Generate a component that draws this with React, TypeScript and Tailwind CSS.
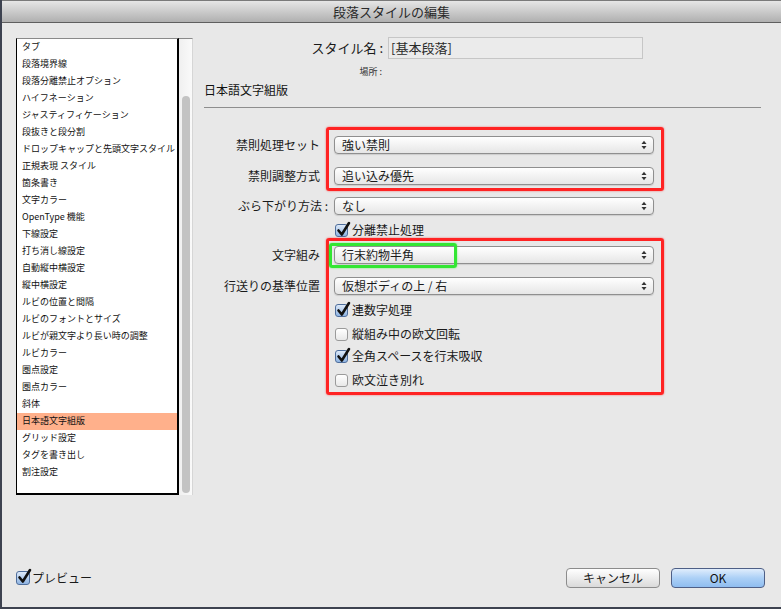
import React from 'react'

const listItems = [
  'タブ',
  '段落境界線',
  '段落分離禁止オプション',
  'ハイフネーション',
  'ジャスティフィケーション',
  '段抜きと段分割',
  'ドロップキャップと先頭文字スタイル',
  '正規表現 スタイル',
  '箇条書き',
  '文字カラー',
  'OpenType 機能',
  '下線設定',
  '打ち消し線設定',
  '自動縦中横設定',
  '縦中横設定',
  'ルビの位置と間隔',
  'ルビのフォントとサイズ',
  'ルビが親文字より長い時の調整',
  'ルビカラー',
  '圏点設定',
  '圏点カラー',
  '斜体',
  '日本語文字組版',
  'グリッド設定',
  'タグを書き出し',
  '割注設定',
]

function Select({ value }: { value: string }) {
  return (
    <div className="flex h-[18px] w-[320px] items-center rounded-[4px] border border-[#8f8f8f] bg-linear-to-b from-white to-[#e6e6e6] pl-[7px] pr-[6px] shadow-[0_1px_1px_rgba(0,0,0,0.12)]">
      <span className="flex-1 text-[12px] leading-[16px] text-[#1a1a1a]">{value}</span>
      <svg width="6" height="10" viewBox="0 0 6 10">
        <path d="M0.5 4 L3 0.8 L5.5 4 Z" fill="#333" />
        <path d="M0.5 6 L3 9.2 L5.5 6 Z" fill="#333" />
      </svg>
    </div>
  )
}

function CheckBox({ checked, size = 13 }: { checked: boolean; size?: number }) {
  return (
    <div
      className={`relative shrink-0 rounded-[3px] border ${
        checked
          ? 'border-[#4f6e9c] bg-linear-to-b from-[#dde9f8] to-[#8fb4e2]'
          : 'border-[#9a9a9a] bg-linear-to-b from-white to-[#e8e8e8]'
      } ${size === 13 ? 'h-[13px] w-[13px]' : 'h-[14px] w-[14px]'}`}
    >
      {checked && (
        <svg className="absolute -top-[3px] left-[1px] overflow-visible" width="13" height="15" viewBox="0 0 13 15">
          <path d="M1.5 8.5 L4.8 12.5 L12 1" fill="none" stroke="#111" strokeWidth="2.6" strokeLinecap="round" strokeLinejoin="round" />
        </svg>
      )}
    </div>
  )
}

function CheckRow({ checked, label, className = '' }: { checked: boolean; label: string; className?: string }) {
  return (
    <div className={`flex h-[14px] items-center gap-[4px] ${className}`}>
      <CheckBox checked={checked} />
      <span className="text-[12px] leading-[14px] text-[#1a1a1a]">{label}</span>
    </div>
  )
}

function Label({ children }: { children: React.ReactNode }) {
  return <div className="h-[18px] text-right text-[12px] leading-[18px] text-[#1a1a1a]">{children}</div>
}

export default function App() {
  return (
    <div className="flex h-[609px] w-[781px] flex-col border-b-2 border-l-2 border-[#3d4250] bg-[#e8e8e8] font-['Noto_Sans_CJK_JP',sans-serif]">
      {/* Title bar */}
      <div className="flex h-[23px] shrink-0 items-center justify-center border-t border-b border-t-[#7a7a7a] border-b-[#5f5f5f] bg-linear-to-b from-[#e6e6e6] to-[#b0b0b0]">
        <span className="text-[13px] leading-[16px] text-[#2a2a2a]">段落スタイルの編集</span>
      </div>

      <div className="flex flex-1 flex-col">
        <div className="flex pl-[14px] pt-[15px]">
          {/* Category list */}
          <div className="h-[457px] w-[163px] overflow-hidden border-t border-b-2 border-l border-r-2 border-t-[#8a8a8a] border-b-black border-l-black border-r-black bg-white">
            {listItems.map((item) => (
              <div
                key={item}
                className={`h-[17px] pl-[5px] text-[9px] leading-[15px] text-[#111] ${
                  item === '日本語文字組版' ? 'bg-[#ffb08b]' : ''
                }`}
              >
                {item}
              </div>
            ))}
          </div>
          <div className="h-[457px] w-[14px] border-t border-r border-t-[#8a8a8a] border-r-[#d6d6d6] bg-linear-to-r from-[#f0f0f0] to-[#fafafa] pl-[3px] pt-[57px]">
            <div className="h-[397px] w-[8px] rounded-full bg-[#c3c3c3]" />
          </div>

          {/* Settings */}
          <div className="ml-[11px] flex flex-1 flex-col">
            <div className="-mt-px flex h-[22px] items-center">
              <div className="w-[179px] text-right text-[13px] leading-[22px] text-[#1a1a1a]">スタイル名 :</div>
              <div className="ml-[5px] h-[22px] w-[255px] border border-[#c6c6c6] bg-[#ebebeb] pl-[2px] text-[13px] leading-[20px] text-[#2a2a2a]">
                [基本段落]
              </div>
            </div>
            <div className="mt-[7px] w-[178px] text-right text-[9px] leading-[12px] text-[#333]">場所 :</div>
            <div className="mt-[4px] text-[12px] leading-[16px] text-[#111]">日本語文字組版</div>
            <div className="mt-[9px] h-px w-[557px] bg-[#8e8e8e]" />

            {/* Group 1 */}
            <div className="mt-[19px] flex">
              <div className="flex w-[116px] flex-col gap-[13px] pt-[9px]">
                <Label>禁則処理セット</Label>
                <Label>禁則調整方式</Label>
              </div>
              <div className="ml-[6px] flex w-[338px] flex-col gap-[13px] rounded-[3px] border-[3px] border-[#ff2323] pb-[3px] pl-[5px] pr-[7px] pt-[6px] shadow-[0_0_2px_rgba(255,0,0,0.6)]">
                <Select value="強い禁則" />
                <Select value="追い込み優先" />
              </div>
            </div>

            <div className="mt-[6px] flex">
              <div className="w-[124px]">
                <Label>ぶら下がり方法 :</Label>
              </div>
              <div className="ml-[6px]">
                <Select value="なし" />
              </div>
            </div>

            <CheckRow className="ml-[131px] mt-[8px]" checked label="分離禁止処理" />

            {/* Group 2 */}
            <div className="mt-[1px] flex">
              <div className="flex w-[116px] flex-col gap-[13px] pt-[8px]">
                <Label>文字組み</Label>
                <Label>行送りの基準位置</Label>
              </div>
              <div className="relative ml-[6px] flex w-[338px] flex-col rounded-[3px] border-[3px] border-[#ff2323] pb-[5px] pl-[5px] pr-[7px] pt-[5px] shadow-[0_0_2px_rgba(255,0,0,0.6)]">
                <Select value="行末約物半角" />
                <div className="mt-[13px]">
                  <Select value="仮想ボディの上 / 右" />
                </div>
                <CheckRow className="ml-px mt-[8px]" checked label="連数字処理" />
                <CheckRow className="ml-px mt-[10px]" checked={false} label="縦組み中の欧文回転" />
                <CheckRow className="ml-px mt-[8px]" checked label="全角スペースを行末吸収" />
                <CheckRow className="ml-px mt-[10px]" checked={false} label="欧文泣き別れ" />
                <div className="absolute left-0 top-[2px] h-[25px] w-[128px] rounded-[3px] border-[3px] border-[#33e633] shadow-[0_0_2px_rgba(0,255,0,0.6)]" />
              </div>
            </div>
          </div>
        </div>

        {/* Footer */}
        <div className="mt-auto flex items-center pb-[19px] pl-[14px] pr-[16px]">
          <CheckBox checked size={14} />
          <span className="ml-[2px] text-[12px] leading-[16px] text-[#1a1a1a]">プレビュー</span>
          <div className="flex-1" />
          <button className="h-[20px] w-[94px] rounded-[4px] border border-[#8c8c8c] bg-linear-to-b from-white to-[#dadada] text-[12px] leading-[18px] text-[#1a1a1a]">
            キャンセル
          </button>
          <button className="ml-[11px] h-[20px] w-[94px] rounded-[4px] border border-[#4e5f86] bg-linear-to-b from-[#e0edfc] via-[#acd0f6] to-[#8fbdf0] text-[12px] leading-[18px] text-[#111]">
            OK
          </button>
        </div>
      </div>
    </div>
  )
}
